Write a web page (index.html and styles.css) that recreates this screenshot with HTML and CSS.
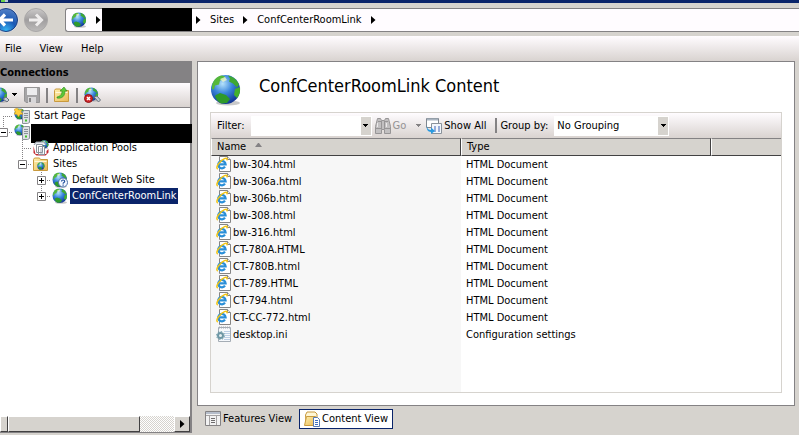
FILE: index.html
```html
<!DOCTYPE html>
<html lang="en">
<head>
    <meta charset="UTF-8">
    <meta name="viewport" content="width=device-width, initial-scale=1.0">
    <title>Internet Information Services (IIS) Manager</title>
    <link rel="stylesheet" href="styles.css">
</head>
<body>
    <!-- Shared icons -->
    <svg class="sprite" aria-hidden="true">
        <defs>
            <radialGradient id="sea" cx=".4" cy=".3" r=".75">
                <stop offset="0" stop-color="#b5e2fb"/>
                <stop offset=".45" stop-color="#3a86dc"/>
                <stop offset="1" stop-color="#0c2c8c"/>
            </radialGradient>
            <radialGradient id="back-fill" cx=".5" cy=".95" r=".9">
                <stop offset="0" stop-color="#35b5f5"/>
                <stop offset=".5" stop-color="#1a58b4"/>
                <stop offset="1" stop-color="#4d7cc4"/>
            </radialGradient>
            <linearGradient id="forward-fill" x2="0" y2="1">
                <stop offset="0" stop-color="#cbc9c9"/>
                <stop offset=".5" stop-color="#a09e9f"/>
                <stop offset="1" stop-color="#bdbbbb"/>
            </linearGradient>
            <linearGradient id="folder-fill" x2="1" y2="1">
                <stop offset="0" stop-color="#fff0ae"/>
                <stop offset="1" stop-color="#e9b955"/>
            </linearGradient>
        </defs>
        <symbol id="globe" viewBox="0 0 32 32">
            <ellipse cx="18" cy="29" rx="12" ry="2.5" fill="#888" opacity=".45"/>
            <circle cx="15.5" cy="15.5" r="14.5" fill="url(#sea)"/>
            <path d="M2 12C3 6 7 2 12 1.5l3 1-1 3-4 1-1 4-4 1-1 4-2-.5z" fill="#55b83a"/>
            <path d="M18 1.5c5 1 9 4 11 9l-2 3-4-4-4-2 1-3z" fill="#3fa833"/>
            <path d="M25 15l5-2c.5 5-1 9-3 11l-3-3z" fill="#43b02d"/>
            <path d="M6 21l4-2 6 2 4 4-3 4-6 .5C8 28 6 25 5 22z" fill="#2f9a2b"/>
            <path d="M10 5l5-2 2 3-4 2z" fill="#eef6c8" opacity=".8"/>
        </symbol>
        <symbol id="server" viewBox="0 0 16 16">
            <use href="#globe" width="12" height="12"/>
            <path d="M8.5 3.5l2-1h5v12l-2 1h-5z" fill="#dde1e4" stroke="#8b9299"/>
            <path d="M10 5.5h4M10 7.5h4M10 9.5h4" stroke="#8b9299"/>
            <path d="M11 12.500h2" stroke="#43c02d" stroke-width="2"/>
        </symbol>
        <symbol id="folder" viewBox="0 0 16 16">
            <path d="M.5 3.5l1-1.500h5l1 1.500h7v11h-14z" fill="url(#folder-fill)" stroke="#c99a3e"/>
            <path d="M1.500 5.500h12" stroke="#fff8d8"/>
        </symbol>
        <symbol id="html-file" viewBox="0 0 16 16">
            <path d="M3.500.5h8l3 3v12h-11z" fill="#fff" stroke="#858585"/>
            <path d="M11.500.5v3h3" fill="#e8e8e8" stroke="#858585"/>
            <path d="M3 8.300H9.600A3.700 3.700 0 1 0 9 10.700" fill="none" stroke="#2a8fd8" stroke-width="2.200"/>
            <path d="M1.800 13C-1 12 3 5 8.500 2.600c2-.9 3.200-.2 2.200 1.800" fill="none" stroke="#f2c413" stroke-width="1.500"/>
        </symbol>
        <symbol id="arrow-right" viewBox="0 0 5 8">
            <path d="M0 0l4.500 4L0 8z"/>
        </symbol>
        <symbol id="arrow-down" viewBox="0 0 5 3">
            <path d="M0 0h5v1H4v1H3v1H2V2H1V1H0z"/>
        </symbol>
        <!-- Tree connectors, one 19x16 cell each -->
        <symbol id="twig" viewBox="0 0 19 16">
            <path d="M10.5 0v16M10 8.5h9" stroke="#848284" stroke-dasharray="1 1"/>
        </symbol>
        <symbol id="twig-plus" viewBox="0 0 19 16">
            <use href="#twig"/>
            <path d="M6.5 4.5h8v8h-8z" fill="#fff" stroke="#848284"/>
            <path d="M8 8.5h5M10.5 6v5" stroke="#000"/>
        </symbol>
        <symbol id="twig-minus" viewBox="0 0 19 16">
            <path d="M10.5 0v8M10 8.5h9" stroke="#848284" stroke-dasharray="1 1"/>
            <path d="M6.5 4.5h8v8h-8z" fill="#fff" stroke="#848284"/>
            <path d="M8 8.5h5" stroke="#000"/>
        </symbol>
        <symbol id="twig-end-plus" viewBox="0 0 19 16">
            <path d="M10.5 0v8M10 8.5h9" stroke="#848284" stroke-dasharray="1 1"/>
            <path d="M6.5 4.5h8v8h-8z" fill="#fff" stroke="#848284"/>
            <path d="M8 8.5h5M10.5 6v5" stroke="#000"/>
        </symbol>
    </svg>

    <div class="titlebar">
        <svg width="8" height="3" viewBox="0 0 8 3" aria-hidden="true"><path d="M1 0h4v2H1z" fill="#6bd04a"/><path d="M5 0h3v2H5z" fill="#b8c8d8"/></svg>
    </div>

    <nav class="navbar">
        <div class="history">
            <button type="button" aria-label="Back">
                <svg width="20" height="26" viewBox="7 0 20 26">
                    <circle cx="13" cy="13" r="12.5" fill="#e4e4ea"/>
                    <circle cx="13" cy="13" r="11.5" fill="url(#back-fill)" stroke="#1c3f80"/>
                    <path d="M6 13h14M12 7.5L6.5 13l5.5 5.5" fill="none" stroke="#fff" stroke-width="3.2"/>
                </svg>
            </button>
            <button type="button" aria-label="Forward" disabled>
                <svg width="26" height="26" viewBox="0 0 26 26">
                    <circle cx="13" cy="13" r="11.5" fill="url(#forward-fill)" stroke="#aaa8a8"/>
                    <path d="M6 13h13M13 7.5l5.500 5.500-5.500 5.500" fill="none" stroke="#efeded" stroke-width="3"/>
                </svg>
            </button>
        </div>
        <div class="address">
            <svg width="16" height="16" aria-hidden="true"><use href="#globe"/></svg>
            <svg width="5" height="8" aria-hidden="true"><use href="#arrow-right"/></svg>
            <span class="redacted"></span>
            <svg width="5" height="8" aria-hidden="true"><use href="#arrow-right"/></svg>
            <a href="#">Sites</a>
            <svg width="5" height="8" aria-hidden="true"><use href="#arrow-right"/></svg>
            <a href="#">ConfCenterRoomLink</a>
            <svg width="5" height="8" aria-hidden="true"><use href="#arrow-right"/></svg>
        </div>
    </nav>

    <div class="menubar">
        <button type="button">File</button>
        <button type="button">View</button>
        <button type="button">Help</button>
    </div>

    <div class="workspace">
        <aside class="connections">
            <h2>Connections</h2>
            <div class="tools">
                <button type="button" aria-label="Connect">
                    <svg width="18" height="18" viewBox="0 0 18 18">
                        <use href="#globe" x="-8" y="1" width="16" height="16"/>
                        <path d="M3 13l3-2 3 3-2 2z" fill="#c5ccd4" stroke="#68717c"/>
                        <path d="M12 7h5v1h-1v1h-1v1h-1V9h-1V8h-1z"/>
                    </svg>
                </button>
                <button type="button" aria-label="Save" disabled>
                    <svg width="16" height="16" viewBox="0 0 16 16">
                        <path d="M.5.5h15v15H2L.5 14z" fill="#a5a4a6" stroke="#969596"/>
                        <path d="M3 1h10v7H3z" fill="#ececee"/>
                        <path d="M4 10h8v6H4z" fill="#d8d7d9"/>
                        <path d="M5 11h2v4H5z" fill="#858486"/>
                    </svg>
                </button>
                <span class="divider"></span>
                <button type="button" aria-label="Up one level">
                    <svg width="16" height="16" viewBox="0 0 16 16">
                        <use href="#folder" width="16" height="16"/>
                        <path d="M3 10c4-1 5-3 5-6H6l4-4 3 4h-2c0 5-3 8-8 7z" fill="#5cc737" stroke="#2e8b22" stroke-width=".6"/>
                    </svg>
                </button>
                <span class="divider"></span>
                <button type="button" aria-label="Delete connection">
                    <svg width="17" height="16" viewBox="0 0 17 16">
                        <use href="#globe" width="15" height="15"/>
                        <path d="M10 10l3-1 3.5 4-2 2z" fill="#c5ccd4" stroke="#68717c"/>
                        <circle cx="4.5" cy="11.5" r="4" fill="#d3262a" stroke="#8d1416"/>
                        <path d="M3 10l3 3M6 10l-3 3" stroke="#fff" stroke-width="1.5"/>
                    </svg>
                </button>
            </div>

            <ul class="tree">
                <li>
                    <svg width="12" height="16" viewBox="7 0 12 16" aria-hidden="true"><path d="M10.5 8v8M10 8.5h9" stroke="#848284" stroke-dasharray="1 1"/></svg>
                    <svg class="node-icon" width="16" height="16" viewBox="0 0 16 16" aria-hidden="true">
                        <use href="#server"/>
                        <path d="M3 0l1.500 2L8 1.500 7 4l2 2-3 .5L4.500 9 3 6.500 0 6l1.500-2L0 1.500z" fill="#ffcf3d" stroke="#c98a12" stroke-width=".5"/>
                    </svg>
                    <span class="label">Start Page</span>
                </li>
                <li>
                    <button type="button" aria-label="Collapse server"><svg width="12" height="16" viewBox="7 0 12 16"><use href="#twig-minus" width="19" height="16"/></svg></button>
                    <svg class="node-icon" width="16" height="16" aria-hidden="true"><use href="#server"/></svg>
                    <span class="redacted"></span>
                    <ul>
                        <li>
                            <svg width="19" height="16" aria-hidden="true"><use href="#twig"/></svg>
                            <svg class="node-icon" width="16" height="16" viewBox="0 0 16 16" aria-hidden="true">
                                <use href="#globe" x="7" width="9" height="9"/>
                                <path d="M1 5l2-3h8l2 3" fill="#e9edf2" stroke="#9199a3"/>
                                <path d="M.5 6v7l3 2.500h9l3-3V9l-2 2v3h-11z" fill="#c32a32"/>
                                <path d="M3.500 4.500h6v8h-6zM5.500 6.500h6v8h-6z" fill="#fff" stroke="#8b939d"/>
                                <path d="M7 9h3M7 11h3M7 13h3" stroke="#8b939d" stroke-width=".8"/>
                            </svg>
                            <span class="label">Application Pools</span>
                        </li>
                        <li>
                            <button type="button" aria-label="Collapse Sites"><svg width="19" height="16"><use href="#twig-minus"/></svg></button>
                            <svg class="node-icon" width="16" height="16" viewBox="0 0 16 16" aria-hidden="true">
                                <use href="#folder" width="16" height="16"/>
                                <use href="#globe" x="4" y="6" width="8" height="8"/>
                            </svg>
                            <span class="label">Sites</span>
                            <ul>
                                <li>
                                    <button type="button" aria-label="Expand Default Web Site"><svg width="19" height="16"><use href="#twig-plus"/></svg></button>
                                    <svg class="node-icon" width="16" height="16" viewBox="0 0 16 16" aria-hidden="true">
                                        <use href="#globe" width="16" height="16"/>
                                        <circle cx="11" cy="10.5" r="4.5" fill="#f4f8ff" stroke="#4d6fa8"/>
                                        <path d="M9.500 9.500c0-2 3.200-2 3.200 0 0 1.200-1.600 1-1.600 2.300M11.100 12.500v1.200" fill="none" stroke="#23519e" stroke-width="1.2"/>
                                    </svg>
                                    <span class="label">Default Web Site</span>
                                </li>
                                <li>
                                    <button type="button" aria-label="Expand ConfCenterRoomLink"><svg width="19" height="16"><use href="#twig-end-plus"/></svg></button>
                                    <svg class="node-icon" width="16" height="16" aria-hidden="true"><use href="#globe"/></svg>
                                    <span class="label selected">ConfCenterRoomLink</span>
                                </li>
                            </ul>
                        </li>
                    </ul>
                </li>
            </ul>

            <div class="scrollbar">
                <button class="scroll-left" type="button" aria-label="Scroll left"></button>
                <div class="thumb"></div>
                <button type="button" aria-label="Scroll right"><svg width="5" height="8"><use href="#arrow-right"/></svg></button>
            </div>
        </aside>

        <div class="main">
            <main class="page">
                <header>
                    <svg width="32" height="32" aria-hidden="true"><use href="#globe"/></svg>
                    <h1>ConfCenterRoomLink Content</h1>
                </header>

                <section class="listing">
                    <form class="filterbar">
                        <label for="filter">Filter:</label>
                        <div class="combo filter-combo">
                            <input id="filter" type="text">
                            <button type="button" aria-label="Filter history"><svg width="5" height="3"><use href="#arrow-down"/></svg></button>
                        </div>
                        <button class="go" type="submit" disabled>
                            <svg width="16" height="16" viewBox="0 0 16 16" aria-hidden="true">
                                <path d="M2.5.5h3l1 2h3l1-2h3l2 8v7h-6v-4h-3v4h-6v-7z" fill="#c2c0c1" stroke="#979596"/>
                                <path d="M1 10.500h5M10 10.500h5M3 3.500h3M10 3.500h3M6.500 3v8M9.500 3v8" stroke="#979596"/>
                                <path d="M2.500 5v4M11.500 5v4" stroke="#ebe9ea"/>
                            </svg>
                            Go
                            <svg class="go-arrow" width="5" height="3" aria-hidden="true"><use href="#arrow-down"/></svg>
                        </button>
                        <button class="show-all" type="button">
                            <svg width="16" height="16" viewBox="0 0 16 16" aria-hidden="true">
                                <path d="M.5.500h12v9H.5z" fill="#fff" stroke="#7f8790"/>
                                <path d="M1 1.500h11" stroke="#aab4c0" stroke-width="2"/>
                                <path d="M5.500 5.500h10v10h-10z" fill="#f2f6fb" stroke="#8a929b"/>
                                <path d="M8 9h2M12 9h2M8 11h2M12 11h2M8 13h2M12 13h2" stroke="#3f63b5" stroke-width="1.2"/>
                                <path d="M1 8c0 3 2 4 4 4V9.500l4 3.500-4 3v-2c-3 0-5-3-4-6z" fill="#2a9ae0"/>
                            </svg>
                            Show All
                        </button>
                        <span class="divider"></span>
                        <label for="group">Group by:</label>
                        <div class="combo group-combo">
                            <select id="group">
                                <option>No Grouping</option>
                            </select>
                            <span class="drop"><svg width="5" height="3" aria-hidden="true"><use href="#arrow-down"/></svg></span>
                        </div>
                    </form>

                    <table>
                        <thead>
                            <tr>
                                <th class="name">Name <svg width="7" height="4" viewBox="0 0 7 4" aria-hidden="true"><path d="M3 0h1l3 4H0z" fill="#848284"/></svg></th>
                                <th class="type">Type</th>
                                <th aria-label="Other"></th>
                            </tr>
                        </thead>
                        <tbody>
                            <tr><td><svg width="16" height="16" aria-hidden="true"><use href="#html-file"/></svg>bw-304.html</td><td>HTML Document</td><td></td></tr>
                            <tr><td><svg width="16" height="16" aria-hidden="true"><use href="#html-file"/></svg>bw-306a.html</td><td>HTML Document</td><td></td></tr>
                            <tr><td><svg width="16" height="16" aria-hidden="true"><use href="#html-file"/></svg>bw-306b.html</td><td>HTML Document</td><td></td></tr>
                            <tr><td><svg width="16" height="16" aria-hidden="true"><use href="#html-file"/></svg>bw-308.html</td><td>HTML Document</td><td></td></tr>
                            <tr><td><svg width="16" height="16" aria-hidden="true"><use href="#html-file"/></svg>bw-316.html</td><td>HTML Document</td><td></td></tr>
                            <tr><td><svg width="16" height="16" aria-hidden="true"><use href="#html-file"/></svg>CT-780A.HTML</td><td>HTML Document</td><td></td></tr>
                            <tr><td><svg width="16" height="16" aria-hidden="true"><use href="#html-file"/></svg>CT-780B.html</td><td>HTML Document</td><td></td></tr>
                            <tr><td><svg width="16" height="16" aria-hidden="true"><use href="#html-file"/></svg>CT-789.HTML</td><td>HTML Document</td><td></td></tr>
                            <tr><td><svg width="16" height="16" aria-hidden="true"><use href="#html-file"/></svg>CT-794.html</td><td>HTML Document</td><td></td></tr>
                            <tr><td><svg width="16" height="16" aria-hidden="true"><use href="#html-file"/></svg>CT-CC-772.html</td><td>HTML Document</td><td></td></tr>
                            <tr>
                                <td><svg width="16" height="16" viewBox="0 0 16 16" aria-hidden="true">
                                    <path d="M2.500 1.500h12v14h-12z" fill="#f6f9fc" stroke="#a5adb5"/>
                                    <path d="M3 1.500h12" stroke="#a5adb5" stroke-width="2" stroke-dasharray="1 1"/>
                                    <path d="M8 5.500h6M8 7.500h6M9 9.500h5M8 11.500h6M8 13.500h6" stroke="#bccfe6"/>
                                    <circle cx="4.5" cy="9.5" r="2.5" fill="#e6eff2" stroke="#6d97a5" stroke-width="2"/>
                                    <circle cx="4.5" cy="9.5" r="4" fill="none" stroke="#6d97a5" stroke-dasharray="1.500 1.600"/>
                                </svg>desktop.ini</td>
                                <td>Configuration settings</td>
                                <td></td>
                            </tr>
                        </tbody>
                    </table>
                </section>
            </main>

            <div class="views">
                <button type="button">
                    <svg width="16" height="16" viewBox="0 0 16 16" aria-hidden="true">
                        <path d="M.5.500h15v14H.5z" fill="#f2f2f2" stroke="#848284"/>
                        <path d="M1 2h14" stroke="#b5bdca" stroke-width="2"/>
                        <path d="M1 4.500h14M4.500 4v10M11.500 4v10" stroke="#a5a3a4"/>
                        <path d="M6 7.500h4M6 9.500h4M6 11.500h4" stroke="#6d6b6c"/>
                    </svg>
                    Features View
                </button>
                <button class="active" type="button">
                    <svg width="16" height="16" viewBox="0 0 16 16" aria-hidden="true">
                        <path d="M1.500 4L3 1h8l2 2v8h-11z" fill="#fff7d6" stroke="#c99a3e"/>
                        <path d="M.5 14.500l2-9h9l-2 9z" fill="url(#folder-fill)" stroke="#c99a3e"/>
                        <path d="M9.500 6.500h4l2 2v7h-6z" fill="#fff" stroke="#5578b5"/>
                        <path d="M11 9.500h3M11 11.500h3M11 13.500h3" stroke="#3f6fc4"/>
                    </svg>
                    Content View
                </button>
            </div>
        </div>
    </div>
</body>
</html>
```
FILE: styles.css
```css
* {
    box-sizing: border-box;
}

body {
    margin: 0;
    height: 100vh;
    display: flex;
    flex-direction: column;
    overflow: hidden;
    background: #d6d3ce;
    color: #000;
    font: 11px/16px Tahoma, "DejaVu Sans Condensed", "DejaVu Sans", sans-serif;
    white-space: nowrap;
}

svg {
    display: block;
    flex: none;
}

button,
input,
select {
    margin: 0;
    padding: 0;
    border: 0;
    background: none;
    color: inherit;
    font: inherit;
    outline: 0;
}

a {
    color: inherit;
    text-decoration: none;
}

.sprite {
    position: absolute;
    width: 0;
    height: 0;
}

.redacted {
    background: #000;
}

.titlebar {
    flex: none;
    height: 3px;
    background: #0a246a;
}

/* Back / forward and breadcrumb */

.navbar {
    flex: none;
    height: 33px;
    display: flex;
    align-items: center;
}

.history {
    display: flex;
    gap: 3px;
    padding-right: 16px;
}

.address {
    flex: 1;
    height: 24px;
    display: flex;
    align-items: center;
    gap: 9px;
    padding-left: 5px;
    background: #fffcff;
    border: 1px solid #848284;
    border-right: 0;
    border-radius: 3px 0 0 3px;

    .redacted {
        width: 90px;
        height: 23px;
        margin: 0 -5px 0 -8px;
    }
}

.menubar {
    flex: none;
    height: 25px;
    display: flex;
    gap: 18px;
    padding-left: 5px;
    background: linear-gradient(#fffcff, #d9d3d0);
}

.workspace {
    flex: 1;
    min-height: 0;
    display: flex;
    gap: 5px;
}

/* Connections pane */

.connections {
    width: 192px;
    flex: none;
    display: flex;
    flex-direction: column;
    margin-bottom: 2px;
    background: #fff;
    border: solid #848284;
    border-width: 0 2px 1px 0;

    h2 {
        margin: 0;
        height: 22px;
        background: #848284;
        font-size: 11px;
        line-height: 24px;
    }
}

.tools {
    height: 25px;
    display: flex;
    align-items: center;
    gap: 6px;
    background: linear-gradient(#fffcff, #d9d3d0);
    border-bottom: 1px solid #848284;
}

.divider {
    width: 2px;
    height: 15px;
    background: #848284;
}

.tree {
    flex: 1;
    margin: 0;
    padding: 0;
    list-style: none;

    ul {
        flex-basis: 100%;
        margin: 0;
        padding: 0 0 0 12px;
        list-style: none;
    }

    ul ul {
        padding-left: 19px;
    }

    li {
        display: flex;
        flex-wrap: wrap;
    }

    .node-icon {
        margin: 0 2px;
    }

    .label {
        padding: 0 2px;
    }

    .selected {
        background: #0a246a;
        color: #fff;
    }

    .redacted {
        flex: 1;
        height: 19px;
        margin: 0 -2px -3px -1px;
    }
}

.scrollbar {
    height: 16px;
    display: flex;
    background: repeating-conic-gradient(#fff 0 25%, #d6d3ce 0 50%) 0 0 / 2px 2px;

    button,
    .thumb {
        background: #d6d3ce;
        border: 1px solid;
        border-color: #fff #424142 #424142 #fff;
    }

    button {
        width: 16px;
        display: grid;
        place-content: center;
    }

    .scroll-left {
        width: 8px;
    }

    .thumb {
        width: 132px;
        margin-right: auto;
    }
}

/* Content pane */

.main {
    flex: 1;
    min-width: 0;
    display: flex;
    flex-direction: column;
    padding-right: 4px;
}

.page {
    flex: 1;
    min-height: 0;
    display: flex;
    flex-direction: column;
    padding: 12px;
    background: #fff;
    border: 1px solid #848284;

    header {
        display: flex;
        gap: 17px;
        padding-bottom: 6px;
    }

    h1 {
        margin: 0;
        font-size: 18px;
        font-weight: normal;
        line-height: 24px;
    }
}

.listing {
    flex: 1;
    display: flex;
    flex-direction: column;
    border: 1px solid #d6d3ce;
    background: linear-gradient(90deg, #f7f7f7 250px, #fff 250px);
}

.filterbar {
    height: 25px;
    display: flex;
    align-items: center;
    padding-left: 6px;
    background: linear-gradient(#fffcff, #d9d3d0);

    button {
        display: flex;
        align-items: center;
    }
}

.combo {
    height: 20px;
    display: flex;
    background: #fff;
    border: 1px solid #fff;

    input,
    select {
        flex: 1;
        min-width: 0;
        appearance: none;
    }

    button,
    .drop {
        width: 10px;
        display: grid;
        place-content: center;
        background: #d6d3ce;
    }
}

.filter-combo {
    width: 121px;
    margin: 0 3px 0 6px;
}

.group-combo {
    width: 115px;
    margin-left: 6px;

    select {
        padding-left: 2px;
    }
}

.go {
    gap: 2px;
    color: #949294;
    fill: #848284;
}

.go-arrow {
    margin: 0 5px 0 8px;
}

.show-all {
    gap: 2px;
}

.filterbar .divider {
    margin: 0 3px 0 9px;
}

table {
    width: 100%;
    table-layout: fixed;
    border-collapse: separate;
    border-spacing: 0;
}

th {
    height: 18px;
    padding: 0 5px;
    background: #d6d3ce;
    border: 1px solid;
    border-color: #848284 #424142 #424142 #fff;
    font-weight: normal;
    line-height: 16px;
    text-align: left;

    svg {
        display: inline-block;
        margin: 0 0 3px 6px;
    }

    &:last-child {
        border-right: 0;
    }
}

.name,
.type {
    width: 250px;
}

td {
    height: 17px;
    padding: 0 5px;
    line-height: 17px;

    svg {
        float: left;
        margin-right: 1px;
    }
}

/* Features / Content switch */

.views {
    height: 29px;
    display: flex;
    align-items: flex-start;
    gap: 2px;
    padding: 3px 3px 0;

    button {
        height: 20px;
        display: flex;
        align-items: center;
        gap: 2px;
        padding: 0 4px;
        border: 1px solid transparent;
    }

    .active {
        background: #fff;
        border-color: #0a246a;
    }
}
```
